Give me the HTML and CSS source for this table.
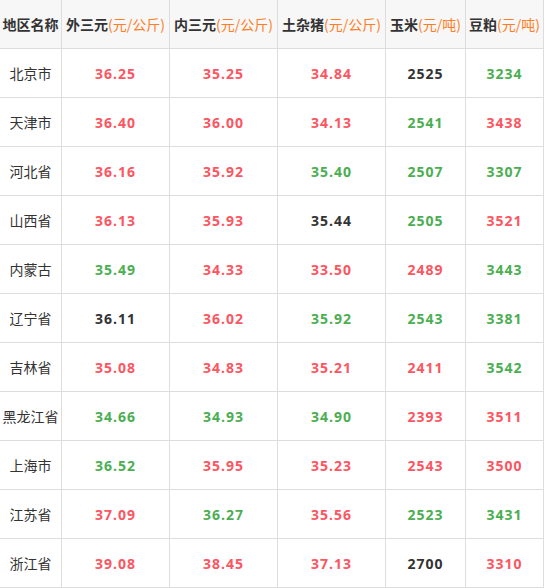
FILE: index.html
```html
<!DOCTYPE html>
<html lang="zh">
<head>
<meta charset="utf-8">
<link rel="stylesheet" href="styles.css">
</head>
<body>
<table class="price">
<colgroup>
<col class="c1"><col class="c2"><col class="c3"><col class="c4"><col class="c5"><col class="c6">
</colgroup>
<thead>
<tr>
<th>地区名称</th>
<th>外三元<span class="u">(元/公斤)</span></th>
<th>内三元<span class="u">(元/公斤)</span></th>
<th>土杂猪<span class="u">(元/公斤)</span></th>
<th>玉米<span class="u">(元/吨)</span></th>
<th>豆粕<span class="u">(元/吨)</span></th>
</tr>
</thead>
<tbody>
<tr><td class="n">北京市</td><td class="r">36.25</td><td class="r">35.25</td><td class="r">34.84</td><td class="k">2525</td><td class="g">3234</td></tr>
<tr><td class="n">天津市</td><td class="r">36.40</td><td class="r">36.00</td><td class="r">34.13</td><td class="g">2541</td><td class="r">3438</td></tr>
<tr><td class="n">河北省</td><td class="r">36.16</td><td class="r">35.92</td><td class="g">35.40</td><td class="g">2507</td><td class="g">3307</td></tr>
<tr><td class="n">山西省</td><td class="r">36.13</td><td class="r">35.93</td><td class="k">35.44</td><td class="g">2505</td><td class="r">3521</td></tr>
<tr><td class="n">内蒙古</td><td class="g">35.49</td><td class="r">34.33</td><td class="r">33.50</td><td class="r">2489</td><td class="g">3443</td></tr>
<tr><td class="n">辽宁省</td><td class="k">36.11</td><td class="r">36.02</td><td class="g">35.92</td><td class="g">2543</td><td class="g">3381</td></tr>
<tr><td class="n">吉林省</td><td class="r">35.08</td><td class="r">34.83</td><td class="r">35.21</td><td class="r">2411</td><td class="g">3542</td></tr>
<tr><td class="n">黑龙江省</td><td class="g">34.66</td><td class="g">34.93</td><td class="g">34.90</td><td class="r">2393</td><td class="r">3511</td></tr>
<tr><td class="n">上海市</td><td class="g">36.52</td><td class="r">35.95</td><td class="r">35.23</td><td class="r">2543</td><td class="r">3500</td></tr>
<tr><td class="n">江苏省</td><td class="r">37.09</td><td class="g">36.27</td><td class="r">35.56</td><td class="g">2523</td><td class="g">3431</td></tr>
<tr><td class="n">浙江省</td><td class="r">39.08</td><td class="r">38.45</td><td class="r">37.13</td><td class="k">2700</td><td class="r">3310</td></tr>
</tbody>
</table>
</body>
</html>
```
FILE: styles.css
```css
html, body {
  margin: 0;
  padding: 0;
  background: #fff;
}
body {
  font-family: "Noto Sans CJK SC", "Noto Sans", sans-serif;
  color: #333;
  overflow: hidden;
}
.price {
  border-collapse: collapse;
  table-layout: fixed;
  width: 545px;
  margin: -1px 0 0 -1px;
}
.c1 { width: 62px; }
.c2 { width: 108px; }
.c3 { width: 108px; }
.c4 { width: 108px; }
.c5 { width: 80px; }
.c6 { width: 78px; }
.price th,
.price td {
  border: 1px solid #ddd;
  padding: 0;
  text-align: center;
  vertical-align: middle;
  white-space: nowrap;
  font-size: 14px;
}
.price th {
  height: 48px;
  background: #f7f7f7;
  font-weight: bold;
  color: #333;
  letter-spacing: 0;
}
.price th .u {
  color: #ff7d26;
  font-weight: normal;
}
.price td {
  height: 48px;
  font-family: "Open Sans", "Noto Sans CJK SC", sans-serif;
  font-weight: bold;
  letter-spacing: 1px;
}
.price td.n {
  font-family: "Noto Sans CJK SC", sans-serif;
  font-weight: normal;
  letter-spacing: 0;
  color: #333;
}
.r { color: #fb5661; }
.g { color: #4cae52; }
.k { color: #333; }
```
